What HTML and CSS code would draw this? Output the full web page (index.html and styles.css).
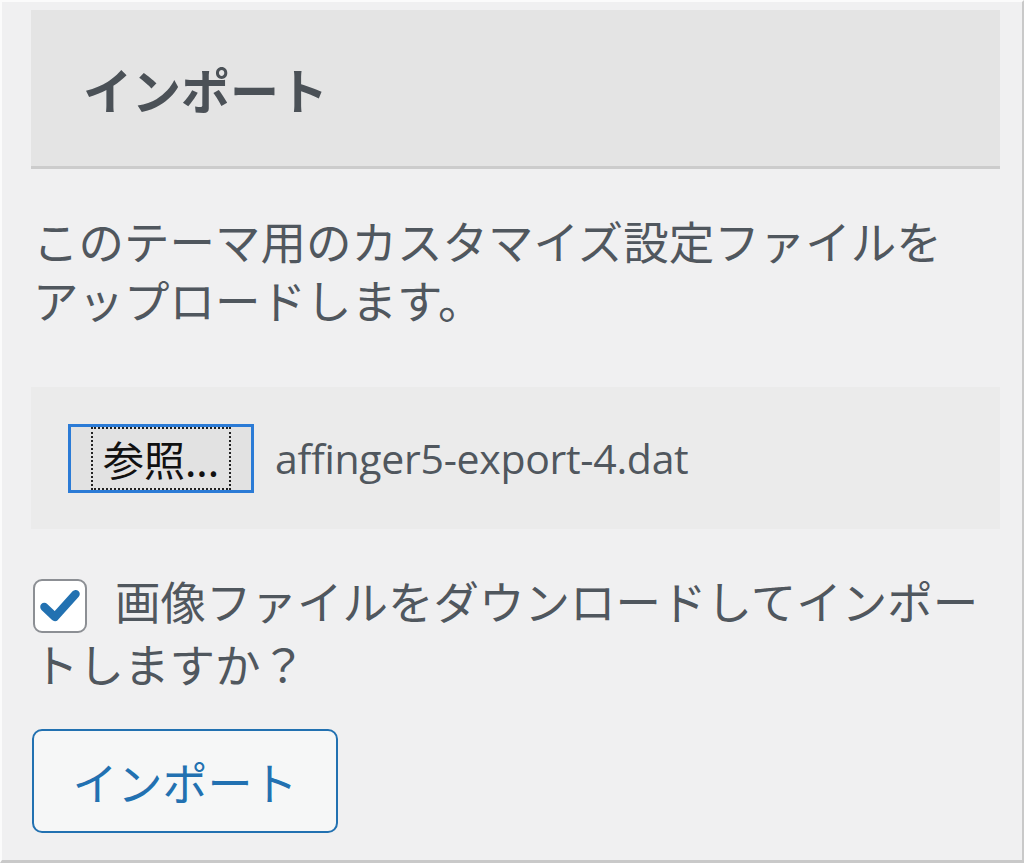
FILE: index.html
```html
<!DOCTYPE html>
<html>
<head>
  <meta charset="UTF-8">
  <title>インポート</title>
  <link rel="stylesheet" href="styles.css">
</head>
<body>
  <div class="panel">
    <div class="head"><h2>インポート</h2></div>
    <p class="desc">このテーマ用のカスタマイズ設定ファイルをアップロードします。</p>
    <div class="file">
      <span class="browse"><span class="focus">参照...</span></span>
      <span class="fname">affinger5-export-4.dat</span>
    </div>
    <label class="chk">
      <span class="box"><svg viewBox="0 0 20 20" width="46" height="46"><path d="M3.2 10.4l4.6 4.4 9-10" fill="none" stroke="#2271b1" stroke-width="3.6" stroke-linecap="round" stroke-linejoin="round"/></svg></span>画像ファイルをダウンロードしてインポートしますか？
    </label>
    <button class="btn">インポート</button>
  </div>
</body>
</html>
```

FILE: styles.css
```css
html, body {margin:0;height:100%;}
body {background:#f0f0f1;font-family:"Noto Sans CJK JP","Noto Sans",sans-serif;color:#50575e;
  border-top:2px solid #fbfbfb;border-left:2px solid #fbfbfb;border-right:2px solid #c9c9c9;border-bottom:3px solid #c9c9c9;box-sizing:border-box;}
.panel {padding:8px 22px 0 29px;}
.head {height:156px;background:#e4e4e4;border-bottom:3px solid #cccccc;display:flex;align-items:center;}
.head h2 {margin:0 0 0 52px;font-size:49px;font-weight:700;color:#4b5157;}
.desc {margin:42px 0 0 2px;width:930px;font-size:45.5px;line-height:59px;font-weight:400;}
.file {margin-top:58px;height:142px;background:#ebebeb;display:flex;align-items:center;padding-left:37px;}
.browse {width:186px;height:69px;box-sizing:border-box;border:3px solid #2b7bd6;background:#e2e2e2;
  display:flex;align-items:center;justify-content:center;}
.focus {border:2px dotted #222;height:63px;width:140px;box-sizing:border-box;
  display:flex;align-items:center;justify-content:center;font-size:41px;color:#111;white-space:nowrap;}
.fname {margin-left:21px;font-family:"Open Sans","Noto Sans",sans-serif;font-size:41px;color:#50575e;letter-spacing:-0.3px;}
.chk {display:block;margin-top:41px;margin-left:2px;font-size:45.5px;line-height:60px;}
.box {display:inline-flex;align-items:center;justify-content:center;width:54px;height:54px;box-sizing:border-box;
  border:2px solid #8c8f94;border-radius:9px;background:#fff;vertical-align:-9px;margin-right:28px;}
.btn {display:block;margin-top:36px;margin-left:1px;width:306px;height:104px;border:2px solid #2271b1;border-radius:10px;
  background:#f6f7f7;color:#2271b1;font-family:"Noto Sans CJK JP",sans-serif;font-size:45px;padding:0;cursor:pointer;}
```
